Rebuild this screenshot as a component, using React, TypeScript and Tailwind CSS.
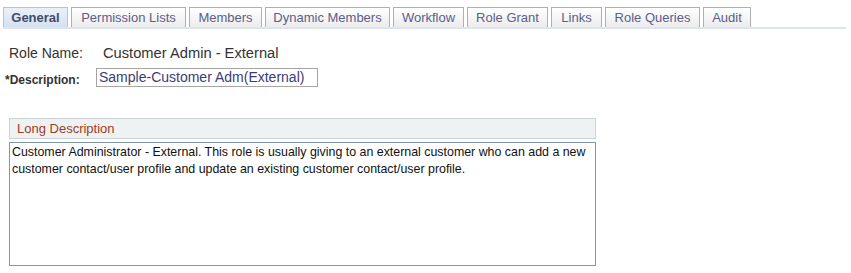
import React from 'react';

const tabs = [
  { label: 'General', w: 'w-[65px]' },
  { label: 'Permission Lists', w: 'w-[115px]' },
  { label: 'Members', w: 'w-[73px]' },
  { label: 'Dynamic Members', w: 'w-[125px]' },
  { label: 'Workflow', w: 'w-[71px]' },
  { label: 'Role Grant', w: 'w-[81px]' },
  { label: 'Links', w: 'w-[51px]' },
  { label: 'Role Queries', w: 'w-[95px]' },
  { label: 'Audit', w: 'w-[48px]' },
];

export default function App() {
  return (
    <div className="w-[851px] h-[273px] bg-white font-['Liberation_Sans',Arial,sans-serif] text-[12px]">
      {/* Tab bar */}
      <div className="pt-[7px] pl-[3px]">
        <div className="flex gap-[3px] w-[843px] border-b-[2px] border-[#dde6f0]">
          {tabs.map((t, i) => (
            <div
              key={t.label}
              className={`${t.w} h-[20px] flex items-center justify-center border border-b-0 ${
                i === 0
                  ? 'bg-gradient-to-b from-[#eaf0f8] to-[#d7e2ef] border-[#b8c4d4] text-[#3e4d6e] font-bold'
                  : 'bg-gradient-to-b from-[#ffffff] to-[#ececec] border-[#a9b1bf] text-[#5d5d8c]'
              } text-[13px]`}
            >
              {t.label}
            </div>
          ))}
        </div>
      </div>

      {/* Role name / description */}
      <div className="flex items-center mt-[16px] h-[17px]">
        <span className="ml-[9px] w-[94px] text-[#333] text-[14px]">Role Name:</span>
        <span className="text-[#333] text-[14.7px]">Customer Admin - External</span>
      </div>
      <div className="flex items-center mt-[4px]">
        <span className="ml-[5px] w-[91px] font-bold text-[#333] mt-[5px]">*Description:</span>
        <div className="w-[222px] h-[19px] border border-[#a6a6a6] px-[2px] flex items-center text-[#3c3c78] text-[14px]">
          Sample-Customer Adm(External)
        </div>
      </div>

      {/* Long description */}
      <div className="ml-[9px] mt-[29px] w-[587px]">
        <div className="h-[21px] bg-[#eef2f3] border border-[#ccd3d6] flex items-center pl-[7px] text-[#9e3c1e] text-[13px]">
          Long Description
        </div>
        <div className="mt-[3px] h-[124px] border border-[#7f98ac] px-[2px] pt-[1px] text-[#111] text-[12.4px] leading-[17px]">
          Customer Administrator - External. This role is usually giving to an external customer who can add a new customer contact/user profile and update an existing customer contact/user profile.
        </div>
      </div>
    </div>
  );
}
